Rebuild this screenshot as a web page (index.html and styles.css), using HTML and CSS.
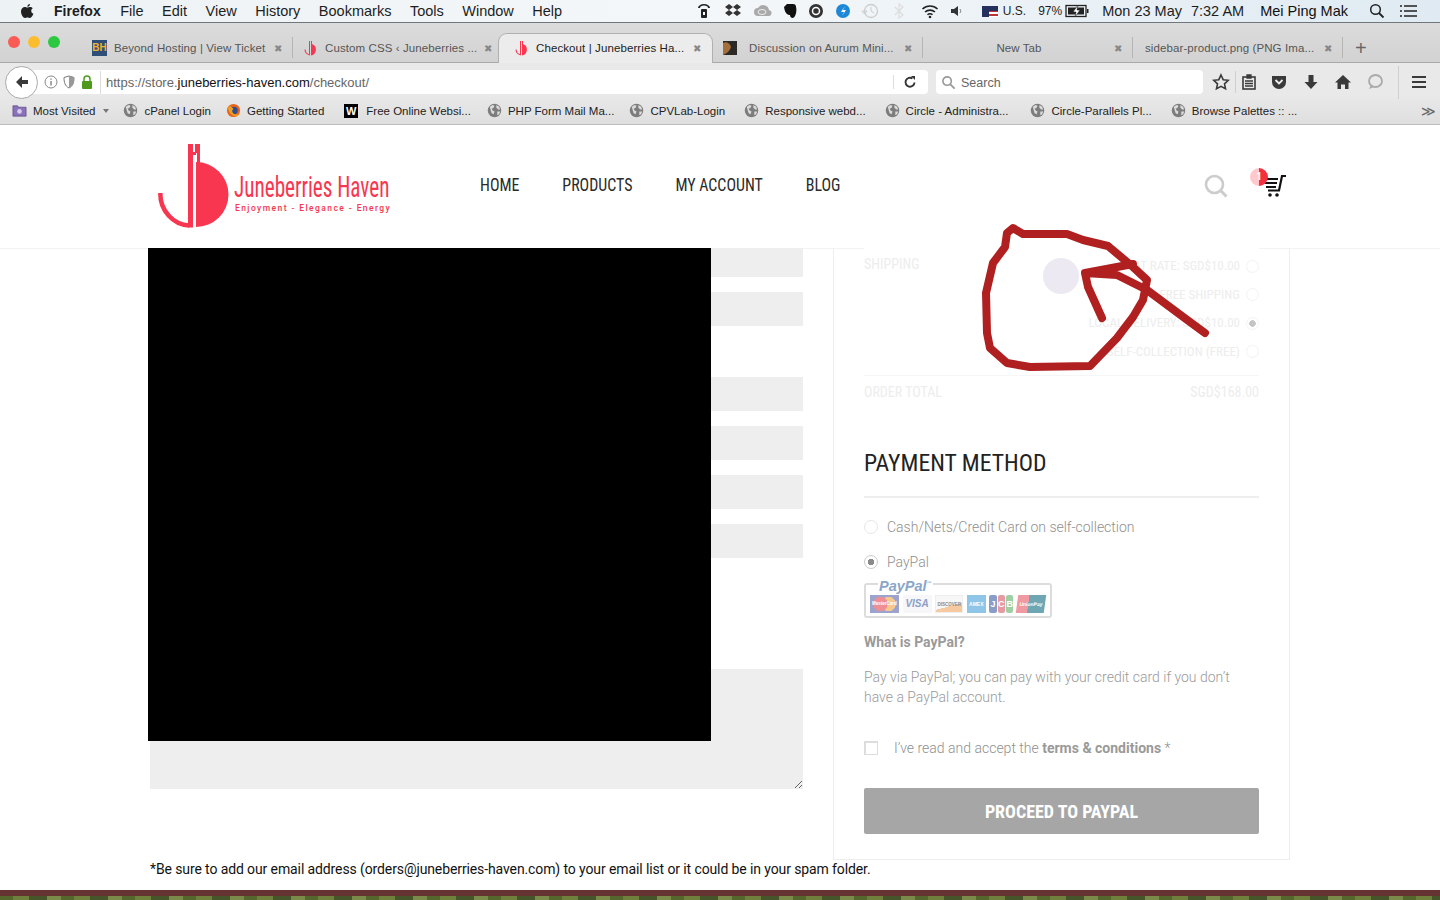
FILE: index.html
```html
<!DOCTYPE html>
<html lang="en">
<head>
<meta charset="utf-8">
<title>Checkout | Juneberries Haven</title>
<link rel="stylesheet" href="styles.css">
</head>
<body>
<svg class="sprite" aria-hidden="true">
  <symbol id="globe" viewBox="0 0 16 16"><circle cx="8" cy="8" r="7.2" fill="#7d7d7d"/><path d="M3 4l3-2 2 1-1 2-2 1 1 2 2 1-1 3-2-1-1-3zM10 2l3 2 1 3-2 0-2-2zM11 9l3 0-1 3-2 1z" fill="#dcdcdc"/></symbol>
  <symbol id="june" viewBox="0 0 16 16"><path d="M9 1h1v3A6 6 0 0 1 9 15.500zM7 1h1v14.500A6 6 0 0 1 2.500 9.500h1.200A4.800 4.800 0 0 0 7 14.200z" fill="#f8364f"/></symbol>
</svg>

<header class="menubar">
  <svg class="apple" viewBox="0 0 14 16" width="14" height="16"><path d="M10 1c0 1.500-1.200 2.900-2.700 2.800C7.200 2.300 8.600 1 10 1zM7.300 4.500c.8 0 1.500-.6 2.800-.6 1 0 2 .5 2.700 1.400-2.300 1.400-1.900 4.500.6 5.500-.7 1.800-2 4.200-3.400 4.200-.9 0-1.300-.6-2.500-.6s-1.700.6-2.500.6C3.300 15 1 11.500 1 8.500c0-3 2-4.600 3.800-4.600 1 0 1.800.6 2.500.6z" fill="#222"/></svg>
  <nav class="menu-left">
    <b>Firefox</b><span>File</span><span>Edit</span><span>View</span><span>History</span><span>Bookmarks</span><span>Tools</span><span>Window</span><span>Help</span>
  </nav>
  <div class="status">
    <svg class="st" viewBox="0 0 18 18"><path d="M3 6a6 4 0 0 1 12 0h-2a4 2.500 0 0 0-8 0z" fill="#222"/><rect x="6" y="7" width="6" height="9" rx="1" fill="#222"/><rect x="8" y="10" width="2" height="3" fill="#fff"/></svg>
    <svg class="st st-w11" viewBox="0 0 18 18"><path d="M5 2l4 3-4 3-4-3zM13 2l4 3-4 3-4-3zM5 8l4 3-4 3-4-3zM13 8l4 3-4 3-4-3z" fill="#333"/></svg>
    <svg class="st st-w12" viewBox="0 0 18 18"><path d="M4 14a4 4 0 0 1 0-8 6 6 0 0 1 11 2 3 3 0 0 1-1 6z" fill="#a9a9a9"/><ellipse cx="8" cy="10" rx="4" ry="2.500" fill="none" stroke="#eee"/></svg>
    <svg class="st" viewBox="0 0 18 18"><path d="M3 5l3-3h6c2 0 3 1 3 3 1 3 0 10-3 11-2 0-3-1-3-3-2 0-5-1-6-8z" fill="#111"/></svg>
    <svg class="st st-w8" viewBox="0 0 18 18"><circle cx="9" cy="9" r="7" fill="#333"/><circle cx="9" cy="9" r="3.500" fill="none" stroke="#fff" stroke-width="1.500"/></svg>
    <svg class="st" viewBox="0 0 18 18"><circle cx="9" cy="9" r="7" fill="#1e88d8"/><path d="M11 4L7 10h3l-2 4 4-6H9z" fill="#fff"/></svg>
    <svg class="st" viewBox="0 0 18 18"><circle cx="10" cy="9" r="6.500" fill="none" stroke="#ccc" stroke-width="1.300"/><path d="M10 5v4l3 2M1 9h5l-2.500 3z" fill="none" stroke="#ccc"/></svg>
    <svg class="st st-w11" viewBox="0 0 18 18"><path d="M5 5l8 8-4 3V2l4 3-8 8" fill="none" stroke="#ddd" stroke-width="1.200"/></svg>
    <svg class="st st-w13" viewBox="0 0 18 18"><path d="M1.500 7a11 11 0 0 1 15 0M4 10a7.500 7.500 0 0 1 10 0M6.500 12.800a3.500 3.500 0 0 1 5 0" fill="none" stroke="#222" stroke-width="1.600"/><circle cx="9" cy="15" r="1.300" fill="#222"/></svg>
    <svg class="st" viewBox="0 0 18 18"><path d="M3 7h3l4-3v10l-4-3H3z" fill="#333"/><path d="M12 7a3 3 0 0 1 0 4" fill="none" stroke="#888"/></svg>
    <span class="flag"></span><span class="st-us">U.S.</span>
    <span class="st-pct">97%</span>
    <svg class="battery" viewBox="0 0 24 14"><rect x="1" y="1.500" width="20" height="11" fill="none" stroke="#222" stroke-width="1.300"/><rect x="3" y="3.500" width="16" height="7" fill="#222"/><rect x="22" y="5" width="1.500" height="4" fill="#222"/><path d="M13 1l-5 7h3l-1 5 5-7h-3z" fill="#fff" stroke="#222" stroke-width=".6"/></svg>
    <span class="st-date">Mon 23 May</span><span class="st-time">7:32 AM</span>
    <span class="st-user">Mei Ping Mak</span>
    <svg class="st-search" viewBox="0 0 16 16"><circle cx="6.500" cy="6.500" r="4.800" fill="none" stroke="#222" stroke-width="1.500"/><path d="M10 10l4.500 4.500" stroke="#222" stroke-width="1.800"/></svg>
    <svg class="st-list" viewBox="0 0 18 14"><path d="M5 2h13M5 7h13M5 12h13" stroke="#222" stroke-width="1.600"/><path d="M1 2h2M1 7h2M1 12h2" stroke="#222" stroke-width="1.600"/></svg>
  </div>
</header>

<div class="tabstrip">
  <div class="lights"><i class="l-red"></i><i class="l-yellow"></i><i class="l-green"></i></div>
  <div class="tab"><span class="fav-bh">BH</span><span class="tab-title">Beyond Hosting | View Ticket</span><span class="tab-x">✖</span></div>
  <div class="tab"><svg class="fav"><use href="#june"/></svg><span class="tab-title">Custom CSS ‹ Juneberries ...</span><span class="tab-x">✖</span></div>
  <div class="tab tab-active"><svg class="fav"><use href="#june"/></svg><span class="tab-title">Checkout | Juneberries Ha...</span><span class="tab-x">✖</span></div>
  <div class="tab tab-next"><svg class="fav" viewBox="0 0 16 16"><rect x="1" y="1" width="14" height="14" fill="#2b2a26"/><path d="M1 3c3-2 7 0 8 4-1 3-3 6-8 8z" fill="#a46f38"/></svg><span class="tab-title">Discussion on Aurum Mini...</span><span class="tab-x">✖</span></div>
  <div class="tab tab-plain"><span class="tab-title tab-center">New Tab</span><span class="tab-x">✖</span></div>
  <div class="tab tab-plain"><span class="tab-title">sidebar-product.png (PNG Ima...</span><span class="tab-x">✖</span></div>
  <span class="tab-plus">+</span>
</div>

<div class="toolbar">
  <div class="backbtn"><svg viewBox="0 0 16 16" width="16" height="16"><path d="M2 8l6-6v4h6v4H8v4z" fill="#3a3a3a"/></svg></div>
  <div class="urlbar">
    <svg class="u-ico" viewBox="0 0 14 14"><circle cx="7" cy="7" r="6" fill="none" stroke="#888"/><path d="M7 6v4.500M7 3.500v1.300" stroke="#777" stroke-width="1.300"/></svg>
    <svg class="u-ico" viewBox="0 0 14 14"><path d="M7 1l5 1.500c0 5-1 8.500-5 10.500-4-2-5-5.500-5-10.500z" fill="none" stroke="#777"/><path d="M7 1l5 1.500c0 5-1 8.500-5 10.500z" fill="#999"/></svg>
    <svg class="u-ico" viewBox="0 0 14 14"><rect x="2" y="6" width="10" height="8" rx="1" fill="#4f9a1c"/><path d="M4 6V4a3 3 0 0 1 6 0v2" fill="none" stroke="#4f9a1c" stroke-width="1.500"/></svg>
    <span class="url"><span class="dim">https://store.</span>juneberries-haven.com<span class="dim">/checkout/</span></span>
    <svg class="reload" viewBox="0 0 14 14"><path d="M11.500 7.500a4.500 4.500 0 1 1-2-4" fill="none" stroke="#333" stroke-width="1.900"/><path d="M8 1l4 0v4z" fill="#333"/></svg>
  </div>
  <div class="searchbar">
    <svg class="s-ico" viewBox="0 0 16 16"><circle cx="6.500" cy="6.500" r="4.500" fill="none" stroke="#999" stroke-width="1.700"/><path d="M10 10l4.500 4.500" stroke="#999" stroke-width="2"/></svg>
    <span>Search</span>
  </div>
  <div class="tools">
    <svg class="t-star" viewBox="0 0 18 18"><path d="M9 2l2.200 4.700 5 .6-3.700 3.500 1 5L9 13.300 4.500 15.800l1-5L1.800 7.300l5-.6z" fill="none" stroke="#3a3a3a" stroke-width="1.600"/></svg>
    <i class="t-sep"></i>
    <svg class="t-ico t-clip" viewBox="0 0 18 18"><rect x="3" y="4" width="12" height="12" fill="none" stroke="#3a3a3a" stroke-width="1.600"/><path d="M7 2h4v3H7zM5 8h8M5 10.500h8M5 13h8" stroke="#3a3a3a" stroke-width="1.300" fill="#3a3a3a"/></svg>
    <svg class="t-ico" viewBox="0 0 18 18"><path d="M2 3h14v6a7 7 0 0 1-14 0z" fill="#3a3a3a"/><path d="M5.500 7L9 10.500 12.500 7" fill="none" stroke="#eee" stroke-width="1.800"/></svg>
    <svg class="t-ico" viewBox="0 0 18 18"><path d="M6.500 2h5v7h4L9 16 2.500 9h4z" fill="#3a3a3a"/></svg>
    <svg class="t-ico" viewBox="0 0 18 18"><path d="M9 2l8 7.500h-2.500V16h-3.500v-4.500H7V16H3.500V9.500H1z" fill="#3a3a3a"/></svg>
    <svg class="t-ico" viewBox="0 0 18 18"><ellipse cx="9.500" cy="8" rx="6.500" ry="6" fill="none" stroke="#aaa" stroke-width="1.800"/><path d="M5 12l-2 4 5-2z" fill="#aaa"/></svg>
    <i class="t-sep t-sep-tall"></i>
    <svg class="t-menu" viewBox="0 0 16 14"><path d="M1 2h14M1 7h14M1 12h14" stroke="#3a3a3a" stroke-width="2.200"/></svg>
  </div>
</div>

<div class="bookmarks">
  <span class="bm"><svg class="bm-ico" viewBox="0 0 16 16"><path d="M1 3h5l1 1.500h8V14H1z" fill="#8a72b8" stroke="#5f4a8c" stroke-width=".8"/><circle cx="8" cy="9" r="2.500" fill="#d8cdec"/></svg>Most Visited<i class="caret"></i></span>
  <span class="bm"><svg class="bm-ico"><use href="#globe"/></svg>cPanel Login</span>
  <span class="bm"><svg class="bm-ico" viewBox="0 0 16 16"><circle cx="8" cy="8" r="7" fill="#e8641b"/><circle cx="8.500" cy="8" r="4" fill="#2c4f94"/><path d="M2 5c1 6 5 9 9 9 2 0 3-1 4-3-2 2-6 2-8-1-1-2 0-3 1-4-2-1-3-2-3-3z" fill="#f0a020"/></svg>Getting Started</span>
  <span class="bm"><span class="bm-w">W</span>Free Online Websi...</span>
  <span class="bm"><svg class="bm-ico"><use href="#globe"/></svg>PHP Form Mail Ma...</span>
  <span class="bm"><svg class="bm-ico"><use href="#globe"/></svg>CPVLab-Login</span>
  <span class="bm"><svg class="bm-ico"><use href="#globe"/></svg>Responsive webd...</span>
  <span class="bm"><svg class="bm-ico"><use href="#globe"/></svg>Circle - Administra...</span>
  <span class="bm"><svg class="bm-ico"><use href="#globe"/></svg>Circle-Parallels Pl...</span>
  <span class="bm"><svg class="bm-ico"><use href="#globe"/></svg>Browse Palettes :: ...</span>
  <span class="bm-more">≫</span>
</div>

<div class="page">
  <div class="site-header">
    <a class="logo">
      <svg class="logo-mark" viewBox="156 141 76 88" width="76" height="88">
        <rect x="188" y="143" width="5" height="83.500" fill="#f8364f"/>
        <path d="M160.300 192a30 32 0 0 0 29 32.500" fill="none" stroke="#f8364f" stroke-width="4.500"/>
        <rect x="195" y="143" width="5" height="9" fill="#f8364f"/>
        <rect x="193" y="151" width="3" height="3" fill="#f8364f"/>
        <rect x="197" y="152" width="3" height="10" fill="#f8364f"/>
        <path d="M196 161A32.500 32.500 0 0 1 196 226z" fill="#f8364f"/>
      </svg>
      <span class="logo-text">
        <span class="logo-name">Juneberries Haven</span>
        <span class="logo-tag">Enjoyment - Elegance - Energy</span>
      </span>
    </a>
    <nav class="site-nav"><a>HOME</a><a>PRODUCTS</a><a>MY ACCOUNT</a><a>BLOG</a></nav>
    <div class="head-icons">
      <svg class="head-search" viewBox="0 0 24 24"><circle cx="10.500" cy="10.500" r="8.500" fill="none" stroke="#ccc" stroke-width="2.600"/><path d="M16.500 16.500l6 6" stroke="#ccc" stroke-width="3"/></svg>
      <span class="cart">
        <svg viewBox="0 0 26 24" width="26" height="24"><path d="M1 5h16M3 9h13M5 13h10M7 16.500h11L21 2h4" fill="none" stroke="#111" stroke-width="2.200"/><circle cx="9" cy="21" r="1.800" fill="#111"/><circle cx="16" cy="21" r="1.800" fill="#111"/></svg>
        <span class="cart-badge">1</span>
      </span>
    </div>
  </div>

  <main class="checkout">
    <section class="form-col">
      <input class="field field-first" disabled>
      <input class="field" disabled>
      <input class="field field-gap" disabled>
      <input class="field" disabled>
      <input class="field" disabled>
      <input class="field" disabled>
      <textarea class="notes" disabled></textarea>
      <div class="redacted"></div>
    </section>

    <aside class="order-col">
      <div class="ship-row">
        <span class="ship-label">SHIPPING</span>
        <ul class="ship-list">
          <li>FLAT RATE: <b>SGD$10.00</b><i class="mini-radio"></i></li>
          <li>FREE SHIPPING<i class="mini-radio"></i></li>
          <li>LOCAL DELIVERY: <b>SGD$10.00</b><i class="mini-radio is-on"></i></li>
          <li>SELF-COLLECTION (FREE)<i class="mini-radio"></i></li>
        </ul>
      </div>
      <div class="total-row"><span>ORDER TOTAL</span><span>SGD$168.00</span></div>

      <h2 class="pay-title">PAYMENT METHOD</h2>

      <div class="pay-opt pay-cash"><i class="radio"></i>Cash/Nets/Credit Card on self-collection</div>
      <div class="pay-opt pay-pp"><i class="radio is-on"></i>PayPal</div>
      <fieldset class="pp-badge">
        <legend>PayPal<sup>™</sup></legend>
        <span class="cc cc-mc">MasterCard</span>
        <span class="cc cc-visa">VISA</span>
        <span class="cc cc-disc">DISCOVER</span>
        <span class="cc cc-amex">AMEX</span>
        <span class="cc cc-jcb"><u>J</u><u>C</u><u>B</u></span>
        <span class="cc cc-up">UnionPay</span>
      </fieldset>
      <p class="what">What is PayPal?</p>
      <p class="pay-desc">Pay via PayPal; you can pay with your credit card if you don’t have a PayPal account.</p>
      <label class="terms"><i class="check"></i><span>I’ve read and accept the <b>terms &amp; conditions</b> *</span></label>
      <button class="proceed">PROCEED TO PAYPAL</button>
    </aside>
    <div class="press-dot"></div>
    <svg class="scribble" viewBox="0 0 1440 900" width="1440" height="900">
      <path d="M1013 228l10 6h44l16 6 25 6 25 21 14 13-4 20-10 17-16 21-27 28-60 1-23-4-17-15-3-15-1-40 7-30 12-16 2-14z" fill="none" stroke="#b02020" stroke-width="8" stroke-linejoin="round"/>
      <path d="M1205 333l-15-11-43-32-30-15-32-2 48-9M1085 273l3 14 14 31" fill="none" stroke="#b02020" stroke-width="8" stroke-linecap="round" stroke-linejoin="round"/>
    </svg>
  </main>

  <p class="mail-note">*Be sure to add our email address (orders@juneberries-haven.com) to your email list or it could be in your spam folder.</p>
  <div class="footer-bar"></div>
  <div class="footer-photo"></div>
</div>
</body>
</html>
```
FILE: styles.css
```css
* { box-sizing: border-box; }
html, body { margin: 0; height: 900px; overflow: hidden; }
body { font-family: "Liberation Sans", Arial, sans-serif; background: #fff; color: #222; width: 1440px; }
.sprite { display: block; width: 0; height: 0; }
svg { flex: none; display: block; }

/* macOS menu bar */
.menubar { height: 23px; display: flex; align-items: center; padding-left: 20px; font-size: 14.500px; color: #1d1d1d;
  background: linear-gradient(90deg, #edf2f5, #f4f7f9 50%, #dfeaf2); border-bottom: 1px solid #70777c; }
.apple { margin-right: 20px; }
.menu-left { display: flex; gap: 18.500px; }
.menu-left span, .menu-left b { white-space: nowrap; }
.menu-left b { font-size: 14px; margin-right: 1px; }
.status { margin-left: auto; display: flex; align-items: center; padding-right: 23px; }
.st { width: 18px; height: 18px; margin-left: 9px; }
.st-w8 { margin-left: 8px; }
.st-w11 { margin-left: 11px; }
.st-w12 { margin-left: 12px; }
.st-w13 { margin-left: 13px; }
.flag { width: 16px; height: 11px; margin-left: 16px; background: linear-gradient(#b33 0 2px, #fff 2px 4px, #b33 4px 6px, #fff 6px 8px, #b33 8px 10px, #fff 10px); box-shadow: inset 8px 6px 0 -1px #26305f; }
.st-us { margin-left: 5px; font-size: 12px; }
.st-pct { margin-left: 12px; font-size: 12px; }
.battery { width: 24px; height: 14px; margin-left: 3px; }
.st-date { margin-left: 13px; }
.st-time { margin-left: 9px; }
.st-user { margin-left: 16px; color: #111; }
.st-search { width: 16px; height: 16px; margin-left: 21px; }
.st-list { width: 18px; height: 14px; margin-left: 14px; }

/* Tabs */
.tabstrip { height: 40px; display: flex; align-items: stretch; font-size: 11.500px; color: #555;
  background: linear-gradient(#dcdcdc, #d2d2d2); border-bottom: 1px solid #a9a9a9; }
.lights { width: 83px; display: flex; gap: 8px; padding: 13px 0 0 8px; }
.lights i { width: 12px; height: 12px; border-radius: 50%; }
.l-red { background: #fb5b55; }
.l-yellow { background: #fbbd2e; }
.l-green { background: #2bc840; }
.tab { width: 210px; flex: none; display: flex; align-items: center; gap: 7px; padding: 14px 11px 3px 9px; position: relative; }
.tab::after { content: ""; position: absolute; right: 0; top: 14px; bottom: 4px; width: 1px; background: #b5b5b5; }
.tab-active { width: 215px; background: #ececec; color: #222; border-radius: 9px 9px 0 0; margin: 10px 0 -1px -5px; padding: 0 11px 1px 14px; border: 1px solid #b0b0b0; border-bottom: 0; }
.tab-active::after { display: none; }
.tab-next { gap: 11px; }
.tab-plain { padding-left: 12px; }
.fav { width: 16px; height: 16px; }
.fav-bh { width: 15px; height: 16px; background: #2f4f78; color: #f2b531; font: bold 10px/16px "Liberation Sans", sans-serif; text-align: center; }
.tab-title { flex: 1; white-space: nowrap; overflow: hidden; letter-spacing: .1px; }
.tab-center { text-align: center; padding-right: 4px; }
.tab-x { font-size: 10px; color: #888; }
.tab-plus { margin: 0 0 0 12px; align-self: center; font-size: 20px; color: #666; line-height: 20px; padding-top: 10px; }

/* Toolbar */
.toolbar { height: 34px; display: flex; align-items: center; padding: 4px 0 0 5px; background: #e9e9e9; }
.backbtn { width: 33px; height: 33px; flex: none; z-index: 1; margin-right: -18px; border-radius: 50%; background: #fff; border: 1px solid #a9a9a9; display: flex; align-items: center; justify-content: center; }
.urlbar { width: 908px; height: 24px; padding: 0 11px 0 24px; display: flex; align-items: center; gap: 4px; background: #fff; border-radius: 0 4px 4px 0; }
.u-ico { width: 14px; height: 14px; }
.url { flex: 1; margin-left: 2px; padding: 1px 0 0 5px; border-left: 1px solid #ddd; font-size: 13px; line-height: 22px; color: #111; }
.dim { color: #666; }
.reload { width: 14px; height: 14px; box-sizing: content-box; padding-left: 9px; border-left: 1px solid #ddd; }
.searchbar { width: 267px; height: 24px; margin-left: 8px; padding-left: 5px; display: flex; align-items: center; gap: 5px; background: #fff; border-radius: 4px; font-size: 12.500px; color: #666; }
.searchbar span { padding-top: 1px; }
.s-ico { width: 15px; height: 15px; }
.tools { display: flex; align-items: center; margin-left: 9px; }
.t-star { width: 18px; height: 18px; margin-right: 5px; }
.t-sep { width: 1px; height: 22px; background: #cfcfcf; }
.t-sep-tall { height: 33px; }
.t-ico { width: 18px; height: 18px; margin-right: 14px; }
.t-clip { margin-left: 4px; margin-right: 12px; }
.t-menu { width: 16px; height: 14px; margin-left: 12px; }

/* Bookmarks */
.bookmarks { height: 28px; display: flex; align-items: center; gap: 17px; padding: 0 4px 0 12px; font-size: 11.500px; color: #222;
  background: linear-gradient(#e8e8e8, #dfdfdf); border-bottom: 1px solid #bdbdbd; }
.bm { display: flex; align-items: center; gap: 6px; white-space: nowrap; }
.bm:nth-child(2) { margin-left: -3px; }
.bm:nth-child(3) { margin-left: -2px; }
.bm:nth-child(4) { margin-left: 3px; }
.bm:nth-child(5) { margin-left: -1px; }
.bm:nth-child(6) { margin-left: -2px; }
.bm:nth-child(7) { margin-left: 2px; }
.bm:nth-child(8) { margin-left: 2px; }
.bm:nth-child(9) { margin-left: 5px; }
.bm:nth-child(10) { margin-left: 2px; }
.bm-ico { width: 15px; height: 15px; }
.bm-w { width: 14px; height: 14px; background: #000; color: #fff; font: bold 11px/14px "Liberation Sans", sans-serif; text-align: center; margin-right: 2px; }
.caret { border: 3px solid transparent; border-top: 4px solid #777; margin: 3px 0 0 2px; }
.bm-more { margin-left: auto; font-size: 14px; color: #666; }

/* Site */
.page { height: 775px; display: flex; flex-direction: column; }
.site-header { height: 124px; flex: none; display: flex; align-items: center; padding: 0 0 1px 156px; border-bottom: 1px solid #f3f3f3; }
.logo { display: flex; align-items: center; gap: 2px; width: 324px; flex: none; color: #f8364f; }
.logo-text { display: flex; flex-direction: column; padding-top: 13px; }
.logo-name { font: 400 29px/31px "Roboto Condensed", "Liberation Sans Narrow", Roboto, sans-serif; white-space: nowrap; transform: scaleX(.73); transform-origin: left center; width: 156px; }
.logo-tag { margin-left: 1px; font: 500 8.500px/10px Roboto, sans-serif; letter-spacing: 1.420px; white-space: nowrap; }
.site-nav { display: flex; gap: 48.500px; margin-bottom: 2px; font: 400 18px/24px "Roboto Condensed", "Liberation Sans Narrow", Roboto, sans-serif; color: #2a2a2a; transform: scaleX(.885); transform-origin: left center; }
.head-icons { margin-left: auto; display: flex; align-items: center; gap: 33px; padding-right: 153px; }
.head-search { width: 24px; height: 24px; }
.cart { position: relative; }
.cart-badge { position: absolute; left: -11px; top: -6px; width: 18px; height: 18px; border-radius: 50%; background: linear-gradient(90deg, #ffc9cc 50%, #f4303e 50%); color: #fff; font: 700 10px/18px Roboto, sans-serif; text-align: center; }

.checkout { height: 611px; flex: none; margin-top: -1px; position: relative; display: flex; padding-left: 150px; gap: 30px; }
.form-col { width: 653px; flex: none; display: flex; flex-direction: column; align-items: stretch; }
.field { height: 34px; margin: 0 0 15px; border: 0; background: #eee; display: block; }
.field-first { height: 29px; }
.field-gap { margin-top: 36px; }
.notes { height: 120px; width: 653px; margin-top: 96px; border: 0; background: #eee; resize: both; display: block; }
.redacted { position: absolute; left: 148px; top: 0; width: 563px; height: 493px; background: #000; }

.order-col { width: 457px; height: 612px; flex: none; padding: 0 30px; border: solid #eee; border-width: 0 1px 1px; font: 300 14px/20px Roboto, sans-serif; color: #8f8f8f; }
.ship-row { display: flex; justify-content: space-between; padding-top: 4px; background: #fff; border-bottom: 1px solid #f6f6f6; height: 128px; color: #ededed; font: 400 14px/20px "Roboto Condensed", "Liberation Sans Narrow", Roboto, sans-serif; }
.ship-label { padding-top: 2px; }
.ship-list { list-style: none; margin: 0; padding: 0; font-size: 13px; text-align: right; }
.ship-list li { height: 28.500px; display: flex; justify-content: flex-end; align-items: center; gap: 3px; }
.ship-list b { font-weight: 400; }
.mini-radio { width: 13px; height: 13px; margin-left: 3px; border-radius: 50%; border: 1px solid #f3f3f3; }
.mini-radio.is-on { background: radial-gradient(circle, #c4c4c4 0 3px, #fff 3.500px); }
.total-row { display: flex; justify-content: space-between; margin-top: 6px; color: #ededed; font: 400 14px/20px "Roboto Condensed", "Liberation Sans Narrow", Roboto, sans-serif; }
.pay-title { margin: 45px 0 18px; padding: 0; height: 51px; font: 400 23.700px/32px "Roboto Condensed", "Liberation Sans Narrow", Roboto, sans-serif; color: #222; border-bottom: 2px solid #eee; }
.pay-opt { display: flex; align-items: center; gap: 9px; font-size: 14px; }
.pay-cash { margin-top: 19px; }
.pay-pp { margin-top: 15px; }
.radio { width: 14px; height: 14px; border-radius: 50%; border: 1px solid #e6e6e6; }
.radio.is-on { background: radial-gradient(circle, #8a8a8a 0 3px, #fff 3.500px); border-color: #ccc; }
.pp-badge { width: 188px; min-width: 0; height: 42px; margin: 4px 0 0; padding: 0 4px; display: flex; gap: 3.600px; align-items: center; border: 2px solid #dcdcdc; border-radius: 3px; }
.pp-badge legend { padding: 0 1px; margin-left: 8px; font: italic 700 14.500px/14px "Liberation Sans", sans-serif; color: #8aa6c8; }
.pp-badge sup { font-size: 5px; }
.cc { height: 18px; flex: none; display: block; font: 700 6px/18px "Liberation Sans", sans-serif; text-align: center; overflow: hidden; }
.cc-mc { width: 29px; background: radial-gradient(circle at 36% 50%, #ee8f96 0 7px, transparent 7.500px), radial-gradient(circle at 64% 50%, #f5c88e 0 7px, transparent 7.500px), #9ca3cc; color: #fff; font-size: 4.500px; }
.cc-visa { width: 29px; background: #f7f7fa; color: #8ea0c6; font-size: 10px; font-style: italic; }
.cc-disc { width: 28px; background: linear-gradient(165deg, #f7f7f7 60%, #f6c9a0 60%); color: #888; font-size: 4.500px; border: 1px solid #eee; }
.cc-amex { width: 19px; background: #8fc6e8; color: #fff; font-size: 5px; }
.cc-jcb { width: 24px; display: flex; gap: 1px; font-size: 9px; }
.cc-jcb u { flex: 1; text-decoration: none; color: #fff; border-radius: 2px; background: #8a9dc7; }
.cc-jcb u:nth-child(2) { background: #e89aa2; }
.cc-jcb u:nth-child(3) { background: #9fd0a4; }
.cc-up { width: 28px; background: linear-gradient(90deg, #ee9aa0 40%, #6fa6b4 40%); color: #fff; font-size: 5px; transform: skewX(-8deg); }
.what { margin: 14px 0 0; font-weight: 700; font-size: 14px; color: #9a9a9a; }
.pay-desc { margin: 15px 0 0; font-size: 14px; color: #9a9a9a; }
.terms { display: flex; align-items: center; gap: 16px; margin-top: 31px; font-size: 14px; }
.terms b { font-weight: 700; color: #9a9a9a; }
.check { width: 14px; height: 14px; border: 1px solid #ddd; border-width: 2px 1px 1px 2px; background: #fff; }
.proceed { display: block; width: 395px; height: 46px; margin-top: 30px; border: 0; border-radius: 2px; background: #a6a6a6; color: #fff; font: 700 18px/46px "Roboto Condensed", "Liberation Sans Narrow", Roboto, sans-serif; }

.press-dot { position: absolute; left: 1043px; top: 10px; width: 36px; height: 36px; border-radius: 50%; background: #ece9f2; }
.scribble { position: absolute; left: 0; top: -248px; pointer-events: none; }

.mail-note { margin: 0; padding: 0 0 0 150px; font: 400 14px/20px Roboto, sans-serif; color: #111; height: 31px; flex: none; letter-spacing: -.11px; }
.footer-bar { height: 6px; flex: none; background: #663333; }
.footer-photo { flex: 1; background: repeating-linear-gradient(90deg, #56672e 0 13px, #6f7f3c 13px 29px, #47552a 29px 47px, #7a8a48 47px 61px); }
```
